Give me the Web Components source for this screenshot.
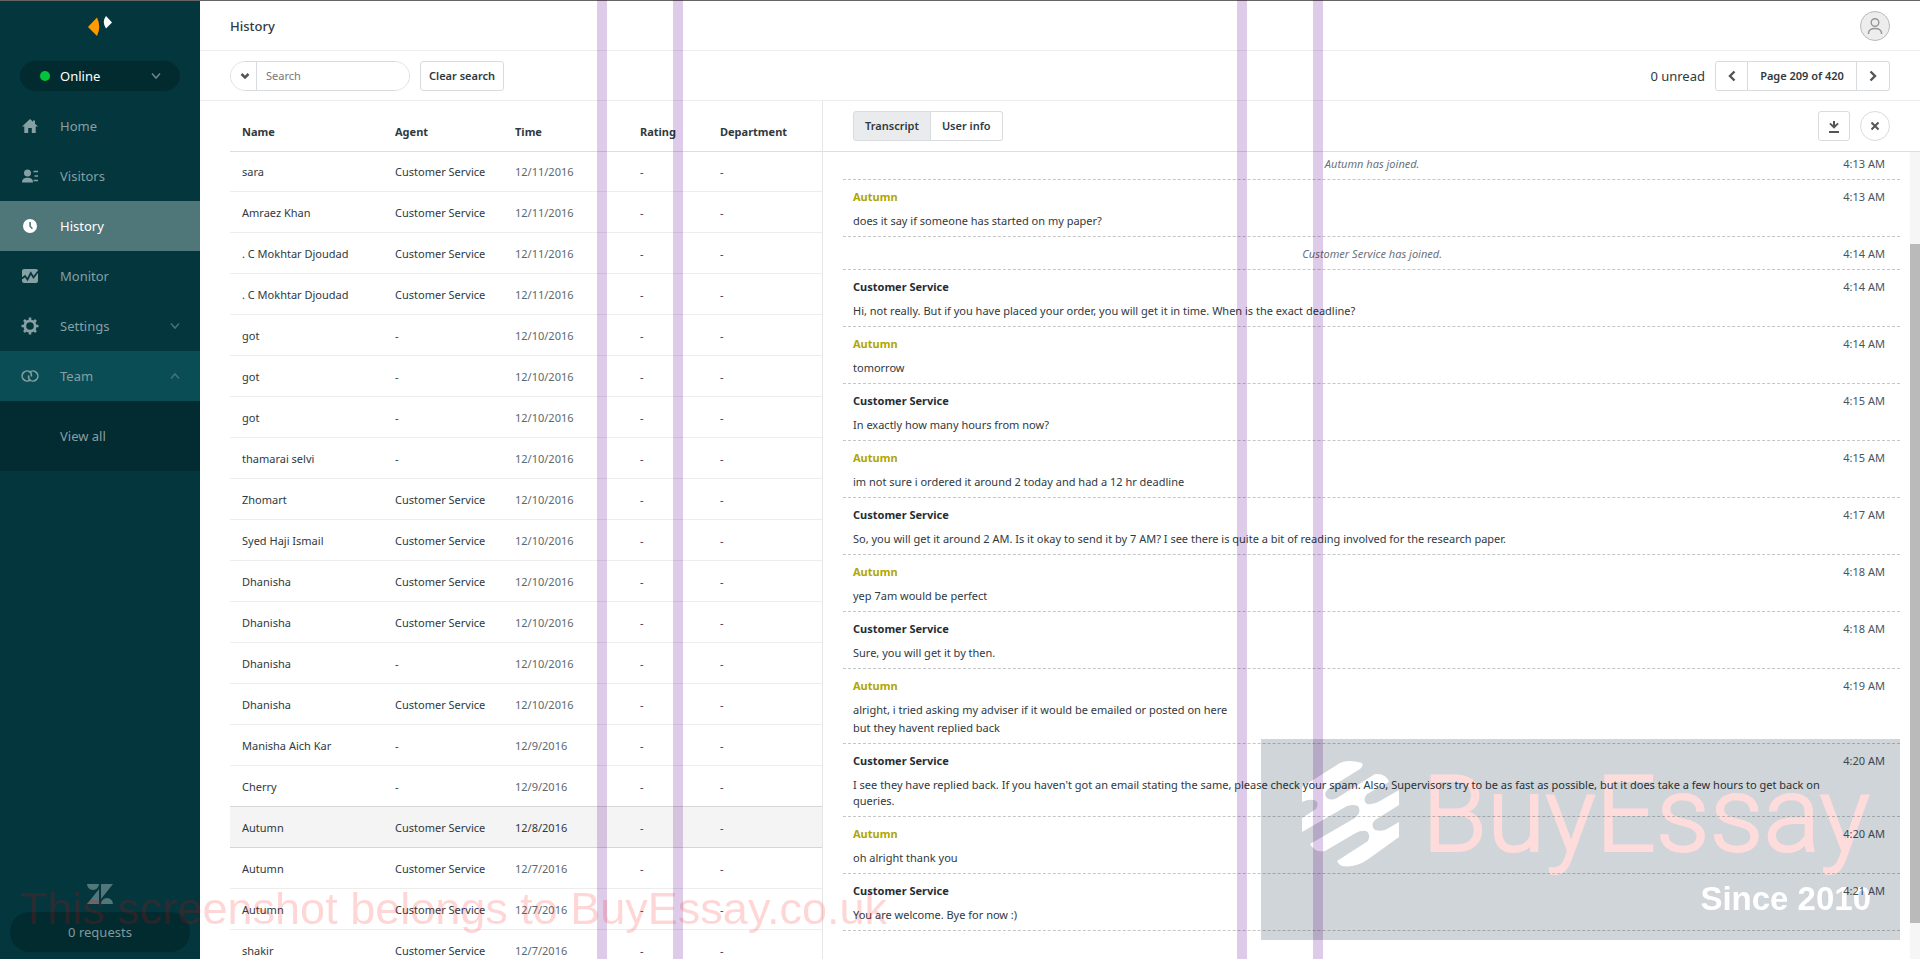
<!DOCTYPE html>
<html lang="en">
<head>
<meta charset="utf-8">
<title>History</title>
<style>
    body {
        margin: 0;
        font-family: "Noto Sans", "Open Sans", sans-serif;
        font-size: 11px;
        line-height: 16px;
        color: #2f3941;
        background: white;
    }
</style>
</head>
<body>
<chat-app>
    <chat-sidebar slot="sidebar">
        <nav-item icon="home">Home</nav-item>
        <nav-item icon="visitors">Visitors</nav-item>
        <nav-item icon="history" active>History</nav-item>
        <nav-item icon="monitor">Monitor</nav-item>
        <nav-item icon="settings" arrow="down">Settings</nav-item>
        <nav-item icon="team" arrow="up" opened>Team</nav-item>
        <nav-item sub>View all</nav-item>
    </chat-sidebar>
    <history-toolbar slot="top"></history-toolbar>
    <history-table slot="list"></history-table>
    <chat-transcript slot="detail">
        <chat-message system time="4:13 AM">Autumn has joined.</chat-message>
        <chat-message visitor name="Autumn" time="4:13 AM"><span>does it say if someone has started on my paper?</span></chat-message>
        <chat-message system time="4:14 AM">Customer Service has joined.</chat-message>
        <chat-message name="Customer Service" time="4:14 AM"><span>Hi, not really. But if you have placed your order, you will get it in time. When is the exact deadline?</span></chat-message>
        <chat-message visitor name="Autumn" time="4:14 AM"><span>tomorrow</span></chat-message>
        <chat-message name="Customer Service" time="4:15 AM"><span>In exactly how many hours from now?</span></chat-message>
        <chat-message visitor name="Autumn" time="4:15 AM"><span>im not sure i ordered it around 2 today and had a 12 hr deadline</span></chat-message>
        <chat-message name="Customer Service" time="4:17 AM"><span>So, you will get it around 2 AM. Is it okay to send it by 7 AM? I see there is quite a bit of reading involved for the research paper.</span></chat-message>
        <chat-message visitor name="Autumn" time="4:18 AM"><span>yep 7am would be perfect</span></chat-message>
        <chat-message name="Customer Service" time="4:18 AM"><span>Sure, you will get it by then.</span></chat-message>
        <chat-message visitor name="Autumn" time="4:19 AM"><span>alright, i tried asking my adviser if it would be emailed or posted on here</span><span>but they havent replied back</span></chat-message>
        <chat-message name="Customer Service" time="4:20 AM"><span>I see they have replied back. If you haven't got an email stating the same, please check your spam. Also, Supervisors try to be as fast as possible, but it does take a few hours to get back on queries.</span></chat-message>
        <chat-message visitor name="Autumn" time="4:20 AM"><span>oh alright thank you</span></chat-message>
        <chat-message name="Customer Service" time="4:21 AM"><span>You are welcome. Bye for now :)</span></chat-message>
    </chat-transcript>
</chat-app>
<water-mark></water-mark>

<script>
"use strict";

const ICONS = {
    home: '<path d="M8 1 0 8.500h2.300V15h3.900v-5h3.600v5h3.900V8.500H16L13 5.700V2.500h-2v1.300z"/>',
    visitors: '<circle cx="5.500" cy="5" r="3.500"/><path d="M0 14.500c0-3.400 2.300-4.700 5.500-4.700s5.500 1.300 5.500 4.700z"/><path d="M11.500 3.500H16M12.500 8H16M11.500 12.500H16" stroke="currentColor" stroke-width="1.300"/>',
    history: '<path fill-rule="evenodd" d="M8 1a7 7 0 1 1 0 14A7 7 0 0 1 8 1zM7.300 4v4.600l2.500 2.700 1.100-1-2-2.300V4z"/>',
    monitor: '<rect y="1" width="16" height="14" rx="2"/><path d="M0 10.500 3 8l2.500 3.500L8.800 5l2.700 4.500L16 3.500" fill="none" stroke="#03363d" stroke-width="1.700"/>',
    settings: '<circle cx="8" cy="8" r="5.200" fill="none" stroke="currentColor" stroke-width="2.800"/><path d="M8-.5v3M8 13.500v3M-.5 8h3M13.500 8h3M2 2l2 2M12 12l2 2M14 2l-2 2M4 12l-2 2" stroke="currentColor" stroke-width="2.600"/>',
    team: '<g fill="none" stroke="currentColor" stroke-width="1.600"><path d="M8.500 11.700A5 5 0 1 1 8.700 4.500Q9.800 6 9.300 8.500"/><path d="M7.500 4.300A5 5 0 1 1 7.300 11.500Q6.200 10 6.700 7.500"/></g>',
    down: '<path d="M4 5.500 8 10l4-4.500" fill="none" stroke="currentColor" stroke-width="1.500"/>',
    up: '<path d="M4 10.500 8 6l4 4.500" fill="none" stroke="currentColor" stroke-width="1.500"/>',
    caret: '<path d="M4.500 6 8 9.500 11.500 6" fill="none" stroke="currentColor" stroke-width="2.500"/>',
    prev: '<path d="M10.500 3.500 6 8l4.500 4.500" fill="none" stroke="currentColor" stroke-width="2.400"/>',
    next: '<path d="M5.500 3.500 10 8l-4.500 4.500" fill="none" stroke="currentColor" stroke-width="2.400"/>',
    close: '<path d="M4.500 4.500l7 7M11.500 4.500l-7 7" stroke="currentColor" stroke-width="2"/>',
    download: '<path d="M7 3h2v4l2.500-2.300 1.200 1.300L8 10.700 3.300 6l1.200-1.300L7 7zM3 13h10v2H3z"/>',
    user: '<g fill="none" stroke="currentColor" stroke-width="1.400"><circle cx="8" cy="4.500" r="3.800"/><path d="M1.500 16v-1c0-3 3-4.500 6.500-4.500s6.500 1.500 6.500 4.500v1"/></g>'
};

function icon(name) {
    return `<svg width="16" height="16" viewBox="0 0 16 16" fill="currentColor" overflow="visible" aria-hidden="true">${ICONS[name]}</svg>`;
}

const BUTTON_STYLES = `
    button {
        box-sizing: border-box;
        height: 30px;
        padding: 0 8px;
        border: 1px solid #d8dcde;
        border-radius: 3px;
        background: white;
        font: 600 11px/16px "Noto Sans", sans-serif;
        color: #2f3941;
    }
    .icon {
        display: flex;
        align-items: center;
        justify-content: center;
        width: 32px;
        padding: 0;
        color: #555;
    }
    .group {
        display: flex;
    }
    .group .icon {
        width: 33px;
    }
    .group button:not(:first-child) {
        border-left: 0;
        border-top-left-radius: 0;
        border-bottom-left-radius: 0;
    }
    .group button:not(:last-child) {
        border-top-right-radius: 0;
        border-bottom-right-radius: 0;
    }
`;

class ShadowElement extends HTMLElement {
    connectedCallback() {
        if (this.shadowRoot)
            return;
        this.attachShadow({ mode: "open" });
        this.shadowRoot.innerHTML = this.html();
    }
}

class ChatApp extends ShadowElement {
    html() {
        return `
            <style>
                :host {
                    box-sizing: border-box;
                    display: grid;
                    grid-template-columns: 200px 1fr;
                    height: 100vh;
                    border-top: 1px solid #666465;
                    overflow: hidden;
                }
                main {
                    display: flex;
                    flex-direction: column;
                    min-height: 0;
                }
                #panes {
                    flex: 1;
                    min-height: 0;
                    display: grid;
                    grid-template-columns: 622fr 1098fr;
                    grid-template-rows: minmax(0, 1fr);
                }
            </style>
            <slot name="sidebar"></slot>
            <main>
                <slot name="top"></slot>
                <div id="panes">
                    <slot name="list"></slot>
                    <slot name="detail"></slot>
                </div>
            </main>
        `;
    }
}

class ChatSidebar extends ShadowElement {
    html() {
        return `
            <style>
                :host {
                    display: flex;
                    flex-direction: column;
                    background: #03363d;
                    font-size: 13px;
                }
                #logo {
                    display: block;
                    margin: 12px auto 10px;
                }
                #status {
                    display: flex;
                    align-items: center;
                    height: 30px;
                    margin: 0 20px 10px;
                    padding: 0 16px 0 20px;
                    border: 0;
                    border-radius: 15px;
                    background: #022b30;
                    font: inherit;
                    color: white;
                }
                #status i {
                    width: 10px;
                    height: 10px;
                    margin-right: 10px;
                    border-radius: 50%;
                    background: #00c53c;
                }
                #status svg {
                    margin-left: auto;
                    color: #6b8588;
                }
                nav {
                    flex: 1;
                }
                #zendesk {
                    display: block;
                    margin: 0 auto 8px;
                }
                #requests {
                    display: block;
                    width: 180px;
                    height: 40px;
                    margin: 0 auto 7px;
                    border: 0;
                    border-radius: 20px;
                    background: #022b30;
                    font: inherit;
                    color: #819a9d;
                }
            </style>
            <svg id="logo" width="26" height="38" viewBox="0 0 26 38">
                <path d="M1 14 10 4.500q4.500 9.500 0 18.500z" fill="#ff9a00"/>
                <path d="M25 9.500 19 3q-4.500 6 0 12.500z" fill="white"/>
            </svg>
            <button id="status"><i></i>Online${icon("down")}</button>
            <nav><slot></slot></nav>
            <svg id="zendesk" width="26" height="20" viewBox="0 0 26 20" fill="#52777b">
                <path d="M0 0h12a6 6 0 0 1-12 0zM14 0h12L14 15zM12 5v15H0zM14 20a6 6 0 0 1 12 0z"/>
            </svg>
            <button id="requests">0 requests</button>
        `;
    }
}
customElements.define("chat-sidebar", ChatSidebar);

class NavItem extends ShadowElement {
    html() {
        const name = this.getAttribute("icon");
        const arrow = this.getAttribute("arrow");
        return `
            <style>
                :host {
                    display: block;
                    color: #86a0a3;
                }
                :host([active]) {
                    background: #4f777a;
                    color: white;
                }
                :host([opened]) {
                    background: #0a4d54;
                }
                :host([sub]) {
                    padding: 10px 0;
                    background: #022b32;
                }
                a {
                    display: flex;
                    align-items: center;
                    height: 50px;
                    padding: 0 17px 0 22px;
                    color: inherit;
                    text-decoration: none;
                }
                #text {
                    flex: 1;
                    margin-left: 22px;
                }
                :host([sub]) #text {
                    margin-left: 38px;
                }
                #arrow {
                    height: 16px;
                    color: #44747a;
                }
            </style>
            <a href="#">
                ${name ? icon(name) : ""}
                <span id="text"><slot></slot></span>
                ${arrow ? `<span id="arrow">${icon(arrow)}</span>` : ""}
            </a>
        `;
    }
}
customElements.define("nav-item", NavItem);

class HistoryToolbar extends ShadowElement {
    html() {
        return `
            <style>
                ${BUTTON_STYLES}
                :host {
                    display: block;
                }
                header, #bar {
                    box-sizing: border-box;
                    display: flex;
                    align-items: center;
                    height: 50px;
                    padding: 0 30px;
                    border-bottom: 1px solid #ededed;
                }
                h1 {
                    flex: 1;
                    margin: 0;
                    font-size: 13px;
                    font-weight: 500;
                }
                #avatar {
                    width: 30px;
                    border-color: #b9b9b9;
                    border-radius: 50%;
                    background: #ededed;
                    color: #949494;
                }
                #search {
                    box-sizing: border-box;
                    display: flex;
                    width: 180px;
                    height: 30px;
                    margin-right: 10px;
                    border: 1px solid #d8dcde;
                    border-radius: 15px;
                    overflow: hidden;
                }
                #search button {
                    width: 26px;
                    height: 28px;
                    border: 0;
                    border-right: 1px solid #d8dcde;
                    border-radius: 0;
                    padding-left: 3px;
                }
                input {
                    flex: 1;
                    min-width: 0;
                    padding: 0 9px;
                    border: 0;
                    outline: 0;
                    font: inherit;
                }
                input::placeholder {
                    color: #777;
                }
                #unread {
                    margin: 0 10px 0 auto;
                    font-size: 13px;
                }
                #page {
                    width: 109px;
                }
            </style>
            <header>
                <h1>History</h1>
                <button id="avatar" class="icon" aria-label="Account">${icon("user")}</button>
            </header>
            <div id="bar">
                <div id="search">
                    <button class="icon" aria-label="Search options">${icon("caret")}</button>
                    <input type="text" placeholder="Search" aria-label="Search">
                </div>
                <button>Clear search</button>
                <span id="unread">0 unread</span>
                <div class="group">
                    <button class="icon" aria-label="Previous page">${icon("prev")}</button>
                    <button id="page">Page 209 of 420</button>
                    <button class="icon" aria-label="Next page">${icon("next")}</button>
                </div>
            </div>
        `;
    }
}
customElements.define("history-toolbar", HistoryToolbar);

const CS = "Customer Service";
const CHATS = [
    ["sara", CS, "12/11/2016"],
    ["Amraez Khan", CS, "12/11/2016"],
    [". C Mokhtar Djoudad", CS, "12/11/2016"],
    [". C Mokhtar Djoudad", CS, "12/11/2016"],
    ["got", "-", "12/10/2016"],
    ["got", "-", "12/10/2016"],
    ["got", "-", "12/10/2016"],
    ["thamarai selvi", "-", "12/10/2016"],
    ["Zhomart", CS, "12/10/2016"],
    ["Syed Haji Ismail", CS, "12/10/2016"],
    ["Dhanisha", CS, "12/10/2016"],
    ["Dhanisha", CS, "12/10/2016"],
    ["Dhanisha", "-", "12/10/2016"],
    ["Dhanisha", CS, "12/10/2016"],
    ["Manisha Aich Kar", "-", "12/9/2016"],
    ["Cherry", "-", "12/9/2016"],
    ["Autumn", CS, "12/8/2016"],
    ["Autumn", CS, "12/7/2016"],
    ["Autumn", CS, "12/7/2016"],
    ["shakir", CS, "12/7/2016"]
];
const SELECTED = 16;

class HistoryTable extends ShadowElement {
    html() {
        const rows = CHATS.map((chat, i) => `
            <tr${i === SELECTED ? ' class="selected"' : ""}>
                <td>${chat[0]}</td><td>${chat[1]}</td><td class="time">${chat[2]}</td><td>-</td><td>-</td>
            </tr>`).join("");
        return `
            <style>
                :host {
                    display: block;
                    padding-left: 30px;
                    overflow: hidden;
                }
                table {
                    width: 100%;
                    border-spacing: 0;
                    table-layout: fixed;
                }
                th, td {
                    box-sizing: border-box;
                    height: 41px;
                    padding: 1px 0 0 12px;
                    border-bottom: 1px solid #ededed;
                    text-align: left;
                    white-space: nowrap;
                }
                th {
                    height: 51px;
                    padding-top: 12px;
                    border-color: #dedede;
                }
                tbody tr:first-child td {
                    height: 40px;
                }
                .time {
                    color: #5c6970;
                }
                tr:has(+ .selected) td, .selected td {
                    border-color: #d6d6d6;
                }
                .selected td {
                    background: #f4f4f4;
                    color: #2f3941;
                }
                .name { width: 153px; }
                .agent { width: 120px; }
                .when { width: 125px; }
                .rating { width: 80px; }
            </style>
            <table>
                <thead>
                    <tr>
                        <th class="name">Name</th>
                        <th class="agent">Agent</th>
                        <th class="when">Time</th>
                        <th class="rating">Rating</th>
                        <th>Department</th>
                    </tr>
                </thead>
                <tbody>${rows}</tbody>
            </table>
        `;
    }
}
customElements.define("history-table", HistoryTable);

class ChatTranscript extends ShadowElement {
    html() {
        return `
            <style>
                ${BUTTON_STYLES}
                :host {
                    display: flex;
                    flex-direction: column;
                    min-width: 0;
                    border-left: 1px solid #e6e6e6;
                }
                header {
                    box-sizing: border-box;
                    display: flex;
                    flex: none;
                    align-items: center;
                    gap: 10px;
                    height: 51px;
                    padding: 0 30px;
                    border-bottom: 1px solid #dedede;
                }
                .group {
                    margin-right: auto;
                }
                .group button {
                    padding: 0 11px;
                }
                .group button:first-child {
                    background: #e9ebed;
                }
                #close {
                    width: 30px;
                    border-radius: 50%;
                }
                #body {
                    flex: 1;
                    display: flex;
                    min-height: 0;
                }
                #messages {
                    flex: 1;
                    min-width: 0;
                    padding: 0 10px 0 20px;
                    overflow: hidden;
                }
                #track {
                    display: flex;
                    box-sizing: border-box;
                    width: 10px;
                    padding: 92px 0 36px;
                    background: #f6f6f6;
                }
                #thumb {
                    flex: 1;
                    background: #bababa;
                }
            </style>
            <header>
                <div class="group">
                    <button>Transcript</button>
                    <button>User info</button>
                </div>
                <button class="icon" aria-label="Download">${icon("download")}</button>
                <button id="close" class="icon" aria-label="Close">${icon("close")}</button>
            </header>
            <div id="body">
                <div id="messages"><slot></slot></div>
                <div id="track"><div id="thumb"></div></div>
            </div>
        `;
    }
}
customElements.define("chat-transcript", ChatTranscript);

class ChatMessage extends ShadowElement {
    html() {
        const name = this.getAttribute("name");
        return `
            <style>
                :host {
                    display: block;
                    padding: 9px 15px 7px 10px;
                    border-bottom: 1px dashed #c6c6c6;
                }
                :host([system]) {
                    padding: 9px 15px 7px 10px;
                }
                :host([system]:first-child) {
                    padding-top: 4px;
                }
                #head {
                    display: flex;
                    justify-content: space-between;
                }
                b {
                    color: #1f2d35;
                }
                :host([visitor]) b {
                    color: #b0a600;
                }
                em {
                    flex: 1;
                    padding-left: 48px;
                    text-align: center;
                    color: #68737d;
                }
                time {
                    color: #49545c;
                }
                #text {
                    display: flex;
                    flex-direction: column;
                    gap: 2px;
                    margin-top: 8px;
                    padding-right: 30px;
                }
            </style>
            <div id="head">
                ${name ? `<b>${name}</b>` : "<em><slot></slot></em>"}
                <time>${this.getAttribute("time")}</time>
            </div>
            ${name ? '<div id="text"><slot></slot></div>' : ""}
        `;
    }
}
customElements.define("chat-message", ChatMessage);

customElements.define("chat-app", ChatApp);

class WaterMark extends ShadowElement {
    html() {
        return `
            <style>
                :host {
                    position: fixed;
                    inset: 0;
                    overflow: hidden;
                    pointer-events: none;
                    mix-blend-mode: multiply;
                }
                .bar {
                    position: absolute;
                    top: 0;
                    bottom: 0;
                    width: 10px;
                    background: #decbe9;
                    mix-blend-mode: multiply;
                }
                #card {
                    position: absolute;
                    right: 20px;
                    bottom: 19px;
                }
            </style>
            <svg id="card" width="639" height="201" viewBox="0 0 639 201">
                <rect width="639" height="201" fill="#d0d5d9"/>
                <path transform="translate(9 1)" fill="white" d="M32 47 70 23Q78 19 92 23 94 26 90 29L58 49Q53 54 57 58 61 61 67 58L105 34Q116 33 119 42L97 54Q92 60 97 64 104 65 110 61L129 50V65L105 80Q100 85 105 90 112 92 117 89L129 82V97L97 120Q85 128 72 126 68 124 67 121L98 101Q101 94 96 91 90 90 84 94L55 111Q45 113 40 104L85 78Q92 72 88 66 83 64 77 66L32 92V78L46 69Q50 62 44 60 38 59 32 62z"/>
                <text x="161" y="112" font-family="Roboto" font-weight="300" font-size="106" fill="#ffdcdc" stroke="#ffdcdc" stroke-width="2">BuyEssay</text>
                <text x="610" y="171" text-anchor="end" font-family="Liberation Sans" font-weight="700" font-size="33" fill="white">Since 2010</text>
            </svg>
            <div class="bar" style="left: 597px"></div>
            <div class="bar" style="left: 673px"></div>
            <div class="bar" style="left: 1237px"></div>
            <div class="bar" style="left: 1313px"></div>
        `;
    }
}
customElements.define("water-mark", WaterMark);

class OwnerNote extends ShadowElement {
    html() {
        return `
            <style>
                :host {
                    position: fixed;
                    left: 20px;
                    bottom: 28px;
                    font: 45px/45px "Liberation Sans", sans-serif;
                    white-space: nowrap;
                    color: rgba(255, 0, 0, .16);
                    pointer-events: none;
                }
            </style>
            <slot></slot>
        `;
    }
}
customElements.define("owner-note", OwnerNote);
</script>
<owner-note>This screenshot belongs to BuyEssay.co.uk</owner-note>
</body>
</html>
